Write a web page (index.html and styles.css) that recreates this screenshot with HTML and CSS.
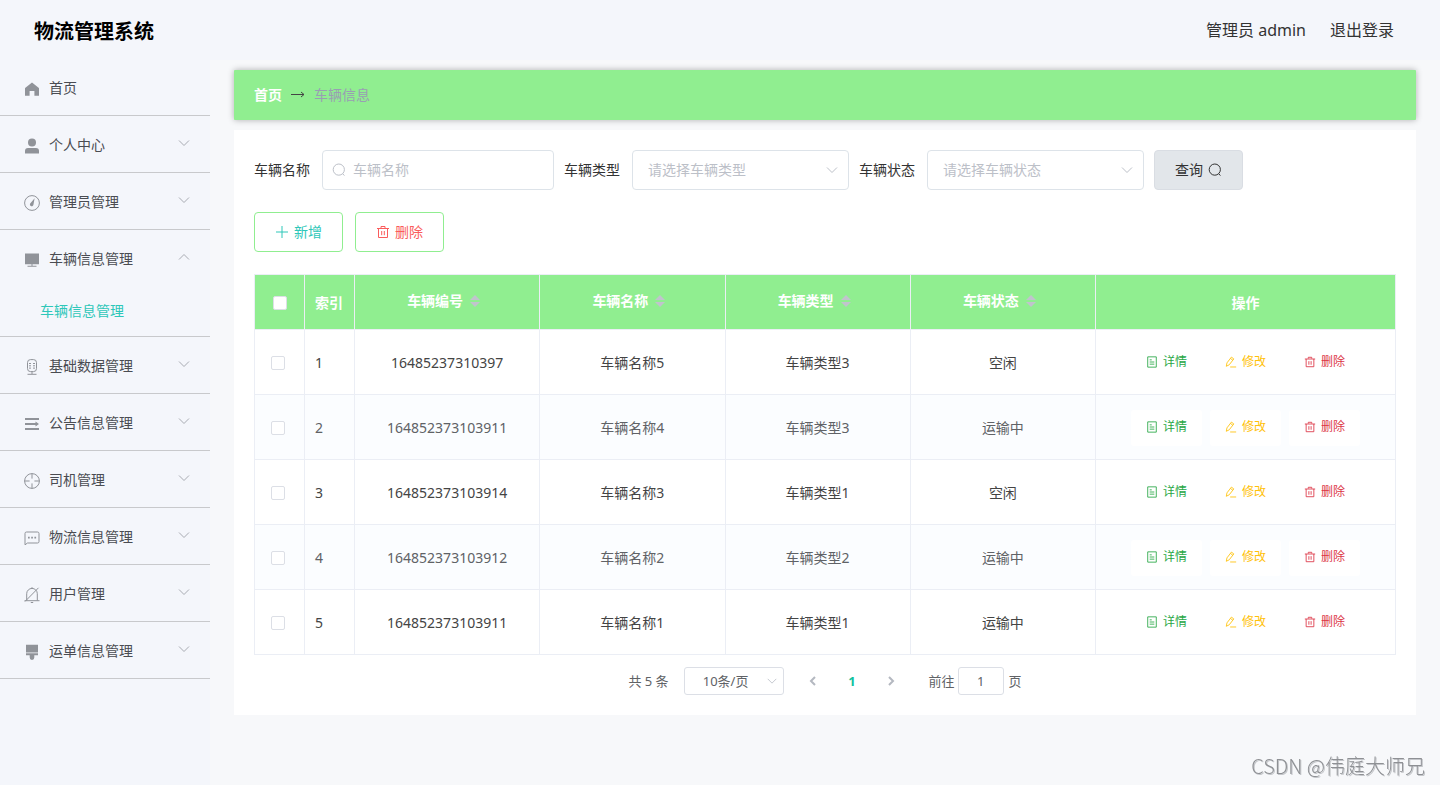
FILE: index.html
```html
<!DOCTYPE html>
<html lang="zh-CN">
<head>
<meta charset="utf-8">
<meta name="viewport" content="width=device-width, initial-scale=1">
<title>物流管理系统</title>
<link rel="stylesheet" href="styles.css">
</head>
<body>
<svg class="sprite" aria-hidden="true">
  <symbol id="down" viewBox="0 0 14 14"><path class="line" d="M2 4.5l5 5 5-5"/></symbol>
  <symbol id="search" viewBox="0 0 14 14"><circle class="line" cx="6.8" cy="6.6" r="5.6"/><path class="line" d="M10.8 10.8l1.6 1.8"/></symbol>
  <symbol id="trash" viewBox="0 0 14 14"><path class="line" d="M1 3.500h12M5 3V1.500h4V3M2.500 3.500v9h9v-9M5.700 6v4.200M8.300 6v4.200"/></symbol>
  <symbol id="plus" viewBox="0 0 14 14"><path class="line" d="M7 1v12M1 7h12"/></symbol>
  <symbol id="doc" viewBox="0 0 14 14"><path class="line" d="M2 1v12h10V1zM4.300 4.500h2.400M4.300 7h5.400M4.300 9.500h5.400"/></symbol>
  <symbol id="edit" viewBox="0 0 14 14"><path class="line" d="M1.500 12l.8-4L7.500 1.300l2.800 2.100L5 10.200zM6.300 2.800l2.800 2.100M6 12.800h7"/></symbol>
</svg>

<header class="topbar">
  <h1 class="brand">物流管理系统</h1>
  <div class="account"><span>管理员 admin</span><a href="#">退出登录</a></div>
</header>

<div class="layout">
  <nav class="sidebar">
    <a class="menu-item" href="#">
      <svg class="menu-icon" viewBox="0 0 16 16"><path class="solid" d="M8 1.5l6.600 5.200a1 1 0 0 1 .4.8v7.200h-4.600V10H5.600v4.700H1V7.500a1 1 0 0 1 .4-.8z"/></svg><span>首页</span>
    </a>
    <a class="menu-item" href="#">
      <svg class="menu-icon" viewBox="0 0 16 16"><circle class="solid" cx="8" cy="4.600" r="4"/><path class="solid" d="M1 15.500v-2.500a3 3 0 0 1 3-3h8a3 3 0 0 1 3 3v2.500z"/></svg><span>个人中心</span><svg class="arrow"><use href="#down"/></svg>
    </a>
    <a class="menu-item" href="#">
      <svg class="menu-icon" viewBox="0 0 16 16"><circle class="line" cx="8" cy="8" r="7.400"/><path class="solid" d="M10.600 3.300L9.500 9.600A1.800 1.800 0 1 1 6.600 8.100z"/></svg><span>管理员管理</span><svg class="arrow"><use href="#down"/></svg>
    </a>
    <div class="menu-group">
      <a class="menu-item" href="#">
        <svg class="menu-icon" viewBox="0 0 16 16"><path class="solid" d="M1 1.500h14v10.700H1zM7.500 12h1v1.800h-1zM3.500 13.800h9v1h-9z"/></svg><span>车辆信息管理</span><svg class="arrow open"><use href="#down"/></svg>
      </a>
      <a class="submenu-item" href="#">车辆信息管理</a>
    </div>
    <a class="menu-item" href="#">
      <svg class="menu-icon" viewBox="0 0 16 16"><rect class="line" x="3.500" y=".6" width="9" height="12" rx="3"/><path class="line" d="M8 12.600v2.400M3.500 15.300h9M5 4.500h2M9 4.500h2M5 6.800h2M9 6.800h2M5 9.100h2M9 9.100h2"/></svg><span>基础数据管理</span><svg class="arrow"><use href="#down"/></svg>
    </a>
    <a class="menu-item" href="#">
      <svg class="menu-icon" viewBox="0 0 16 16"><path class="solid" d="M1 2h14v2H1zM1 7h11v2H1zM1 12h14v2H1zM11.500 5.500L15 8l-3.500 2.500z"/></svg><span>公告信息管理</span><svg class="arrow"><use href="#down"/></svg>
    </a>
    <a class="menu-item" href="#">
      <svg class="menu-icon" viewBox="0 0 16 16"><circle class="line" cx="8" cy="8" r="7.400"/><path class="line" d="M8 .6v5M8 10.400v5M.6 8h5M10.400 8h5"/></svg><span>司机管理</span><svg class="arrow"><use href="#down"/></svg>
    </a>
    <a class="menu-item" href="#">
      <svg class="menu-icon" viewBox="0 0 16 16"><path class="line" d="M1 14.800V3.500a1.500 1.500 0 0 1 1.500-1.500h11A1.500 1.500 0 0 1 15 3.500v8a1.500 1.500 0 0 1-1.500 1.500H3.500z"/><path class="solid" d="M4 6.800h1.700v1.700H4zM7.200 6.800h1.700v1.700H7.200zM10.400 6.800h1.700v1.700h-1.700z"/></svg><span>物流信息管理</span><svg class="arrow"><use href="#down"/></svg>
    </a>
    <a class="menu-item" href="#">
      <svg class="menu-icon" viewBox="0 0 16 16"><path class="line" d="M.5 13.700h15M2.700 13.500V6.700a5.300 5.300 0 0 1 10.600 0v6.800M8 1.300V.2M6.800 15.500h2.400M1 14.500L14.500.8"/></svg><span>用户管理</span><svg class="arrow"><use href="#down"/></svg>
    </a>
    <a class="menu-item" href="#">
      <svg class="menu-icon" viewBox="0 0 16 16"><path class="solid" d="M2 .8h12v7.700H2zM2 9.300h12v1.900h-3.700v2.400a2.300 2.300 0 0 1-4.600 0v-2.400H2z"/></svg><span>运单信息管理</span><svg class="arrow"><use href="#down"/></svg>
    </a>
  </nav>

  <main class="content">
    <div class="breadcrumb">
      <a href="#">首页</a>
      <svg class="crumb-arrow" viewBox="0 0 14 8"><path class="line" d="M0 3.500h13M10 1l3 2.500L10 6"/></svg>
      <span>车辆信息</span>
    </div>

    <section class="panel">
      <form class="filters">
        <div class="field">
          <label for="name">车辆名称</label>
          <div class="control"><svg class="prefix"><use href="#search"/></svg><input class="name-input" id="name" type="text" placeholder="车辆名称"></div>
        </div>
        <div class="field">
          <label for="type">车辆类型</label>
          <div class="control"><select class="filter-select" id="type"><option>请选择车辆类型</option></select><svg class="caret"><use href="#down"/></svg></div>
        </div>
        <div class="field">
          <label for="state">车辆状态</label>
          <div class="control"><select class="filter-select" id="state"><option>请选择车辆状态</option></select><svg class="caret"><use href="#down"/></svg></div>
        </div>
        <button class="btn query" type="button">查询<svg><use href="#search"/></svg></button>
      </form>

      <div class="toolbar">
        <button class="btn add" type="button"><svg><use href="#plus"/></svg>新增</button>
        <button class="btn remove" type="button"><svg><use href="#trash"/></svg>删除</button>
      </div>

      <table class="grid">
        <colgroup><col class="narrow"><col class="narrow"><col><col><col><col><col class="wide"></colgroup>
        <thead>
          <tr>
            <th class="pick"><input type="checkbox" aria-label="全选"></th>
            <th class="index">索引</th>
            <th><div class="sortable">车辆编号<span class="sort"></span></div></th>
            <th><div class="sortable">车辆名称<span class="sort"></span></div></th>
            <th><div class="sortable">车辆类型<span class="sort"></span></div></th>
            <th><div class="sortable">车辆状态<span class="sort"></span></div></th>
            <th>操作</th>
          </tr>
        </thead>
        <tbody>
          <tr>
            <td class="pick"><input type="checkbox" aria-label="选择 1"></td><td class="index">1</td><td>16485237310397</td><td>车辆名称5</td><td>车辆类型3</td><td>空闲</td>
            <td><div class="actions"><button class="detail" type="button"><svg><use href="#doc"/></svg>详情</button><button class="modify" type="button"><svg><use href="#edit"/></svg>修改</button><button class="delete" type="button"><svg><use href="#trash"/></svg>删除</button></div></td>
          </tr>
          <tr>
            <td class="pick"><input type="checkbox" aria-label="选择 2"></td><td class="index">2</td><td>164852373103911</td><td>车辆名称4</td><td>车辆类型3</td><td>运输中</td>
            <td><div class="actions"><button class="detail" type="button"><svg><use href="#doc"/></svg>详情</button><button class="modify" type="button"><svg><use href="#edit"/></svg>修改</button><button class="delete" type="button"><svg><use href="#trash"/></svg>删除</button></div></td>
          </tr>
          <tr>
            <td class="pick"><input type="checkbox" aria-label="选择 3"></td><td class="index">3</td><td>164852373103914</td><td>车辆名称3</td><td>车辆类型1</td><td>空闲</td>
            <td><div class="actions"><button class="detail" type="button"><svg><use href="#doc"/></svg>详情</button><button class="modify" type="button"><svg><use href="#edit"/></svg>修改</button><button class="delete" type="button"><svg><use href="#trash"/></svg>删除</button></div></td>
          </tr>
          <tr>
            <td class="pick"><input type="checkbox" aria-label="选择 4"></td><td class="index">4</td><td>164852373103912</td><td>车辆名称2</td><td>车辆类型2</td><td>运输中</td>
            <td><div class="actions"><button class="detail" type="button"><svg><use href="#doc"/></svg>详情</button><button class="modify" type="button"><svg><use href="#edit"/></svg>修改</button><button class="delete" type="button"><svg><use href="#trash"/></svg>删除</button></div></td>
          </tr>
          <tr>
            <td class="pick"><input type="checkbox" aria-label="选择 5"></td><td class="index">5</td><td>164852373103911</td><td>车辆名称1</td><td>车辆类型1</td><td>运输中</td>
            <td><div class="actions"><button class="detail" type="button"><svg><use href="#doc"/></svg>详情</button><button class="modify" type="button"><svg><use href="#edit"/></svg>修改</button><button class="delete" type="button"><svg><use href="#trash"/></svg>删除</button></div></td>
          </tr>
        </tbody>
      </table>

      <div class="pagination">
        <span class="total">共 5 条</span>
        <div class="control"><select class="page-size" aria-label="每页条数"><option>10条/页</option></select><svg class="caret small"><use href="#down"/></svg></div>
        <div class="pager">
          <button type="button" aria-label="上一页"><svg class="prev" viewBox="0 0 12 12"><path d="M8 2L4 6l4 4"/></svg></button>
          <button class="current" type="button">1</button>
          <button type="button" aria-label="下一页"><svg class="next" viewBox="0 0 12 12"><path d="M4 2l4 4-4 4"/></svg></button>
        </div>
        <label for="jump">前往</label>
        <input class="jump" id="jump" type="text" value="1">
        <span>页</span>
      </div>
    </section>
  </main>
</div>
<div class="watermark">CSDN @伟庭大师兄</div>
</body>
</html>
```
FILE: styles.css
```css
* { box-sizing: border-box; }

body {
  margin: 0;
  min-height: 100vh;
  display: flex;
  flex-direction: column;
  background: #f7f8fa;
  color: #333;
  font: 14px/20px "Noto Sans", "Noto Sans CJK SC", sans-serif;
}

a { color: inherit; text-decoration: none; }
button, input, select { font: inherit; color: inherit; margin: 0; }
button { cursor: pointer; }
svg { flex: none; width: 14px; height: 14px; }
.sprite { position: absolute; width: 0; height: 0; }
.line { fill: none; stroke: currentColor; stroke-width: 1; }
.solid { fill: currentColor; }

.topbar {
  height: 60px;
  padding: 0 46px 0 34px;
  display: flex;
  align-items: center;
  justify-content: space-between;
  background: #f4f6fb;
}
.brand { margin: 0; padding-top: 4px; font-size: 20px; line-height: 28px; color: #000; }
.account { display: flex; gap: 24px; font-size: 16px; line-height: 24px; }

.layout { flex: 1; display: flex; }
.sidebar { width: 210px; flex: none; background: #f4f6fb; color: #4a4c52; }
.menu-item {
  height: 57px;
  padding: 2px 19px 0 24px;
  display: flex;
  align-items: center;
  gap: 9px;
  border-bottom: 1px solid #c8c9cc;
}
.menu-item:first-child { height: 56px; }
.sidebar > .menu-item:first-child { padding-top: 0; }
.menu-icon { width: 16px; height: 16px; color: #909399; margin-top: 2px; }
.arrow { margin-left: auto; margin-bottom: 4px; color: #a8abb2; }
.arrow.open { transform: rotate(180deg); }
.menu-group { border-bottom: 1px solid #c8c9cc; }
.menu-group .menu-item { border-bottom: 0; }
.submenu-item {
  height: 50px;
  padding-left: 40px;
  display: flex;
  align-items: center;
  color: #2ec7b9;
}

.content { flex: 1; min-width: 0; padding: 10px 24px; }
.breadcrumb {
  height: 50px;
  padding: 0 20px;
  display: flex;
  align-items: center;
  gap: 9px;
  background: #90ee90;
  border-radius: 1px;
  box-shadow: 0 0 6px rgba(0, 0, 0, .3);
  color: #999eb3;
}
.breadcrumb a { color: #fff; font-weight: 700; }
.crumb-arrow { height: 8px; color: #444; }

.panel { margin-top: 10px; padding: 20px; background: #fff; }
.filters { display: flex; gap: 10px; }
.field { display: flex; align-items: center; gap: 12px; }
.control { position: relative; display: flex; }
.name-input, .filter-select {
  height: 40px;
  border: 1px solid #dde3e9;
  border-radius: 4px;
  background: #fff;
  color: #bcc0c8;
}
.name-input { width: 232px; padding: 0 10px 2px 30px; }
.name-input::placeholder { color: #bcc0c8; }
.filter-select { width: 217px; padding: 0 32px 0 15px; }
select { appearance: none; }
.prefix { position: absolute; left: 10px; top: 13px; color: #bcc0c8; }
.caret { position: absolute; right: 10px; top: 13px; color: #bcc0c8; pointer-events: none; }
.caret.small { top: 8px; right: 6px; width: 12px; height: 12px; }

.btn {
  width: 89px;
  height: 40px;
  padding: 0;
  display: flex;
  align-items: center;
  justify-content: center;
  gap: 5px;
  border: 1px solid #90ee90;
  border-radius: 4px;
  background: #fff;
}
.query { border-color: #d9dde3; background: #e2e6ea; }
.add { color: #2ec7b9; }
.remove { color: #fa5c5c; }
.toolbar { display: flex; gap: 12px; margin: 22px 0; }

.grid { width: 100%; table-layout: fixed; border-collapse: collapse; }
.grid .narrow { width: 50px; }
.grid .wide { width: 300px; }
.grid th, .grid td { padding: 2px 0 0; border: 1px solid #ebeef5; text-align: center; }
.grid th { height: 55px; background: #90ee90; color: #fff; }
.grid td { height: 65px; }
.grid tbody { color: #444; }
.grid tbody tr:nth-child(even) { background: #fbfdff; color: #606266; }
.grid .index { text-align: left; padding-left: 10px; }
.grid td.pick { padding-right: 4px; }
.grid input {
  appearance: none;
  display: block;
  width: 14px;
  height: 14px;
  margin: 0 auto;
  border: 1px solid #dcdfe6;
  border-radius: 2px;
  background: #fff;
}
.sortable { display: flex; align-items: center; justify-content: center; gap: 7px; padding: 0 7px 4px 0; }
.sort { display: grid; gap: 2px; }
.sort::before, .sort::after { content: ""; border: 5px solid transparent; }
.sort::before { border-top: 0; border-bottom-color: #c0c4cc; }
.sort::after { border-bottom: 0; border-top-color: #c0c4cc; }

.actions { display: flex; justify-content: center; gap: 8px; }
.actions button {
  width: 71px;
  height: 36px;
  padding: 0 0 2px;
  display: flex;
  align-items: center;
  justify-content: center;
  gap: 5px;
  border: 0;
  border-radius: 3px;
  background: #fff;
  font-size: 12px;
}
.actions svg { width: 12px; height: 12px; }
.detail { color: #28a745; }
.modify { color: #ffc107; }
.delete { color: #dc3545; }

.pagination {
  padding-top: 12px;
  display: flex;
  align-items: center;
  justify-content: center;
  color: #606266;
  font-size: 13px;
}
.total { margin-right: 15px; }
.page-size {
  width: 100px;
  height: 28px;
  padding: 0 22px 0 6px;
  border: 1px solid #dcdfe6;
  border-radius: 3px;
  background: #fff;
  text-align: center;
  text-align-last: center;
}
.pager { display: flex; margin: 0 18px 0 10px; }
.pager button {
  width: 39px;
  height: 28px;
  padding: 0;
  display: flex;
  align-items: center;
  justify-content: center;
  border: 0;
  background: none;
  color: #b4b8c0;
}
.pager .current { color: #13c19e; font-weight: 700; }
.pager svg { width: 12px; height: 12px; fill: none; stroke: currentColor; stroke-width: 2; }
.jump {
  width: 46px;
  height: 28px;
  margin: 0 5px 0 3px;
  padding: 0 3px;
  border: 1px solid #dcdfe6;
  border-radius: 3px;
  background: #fff;
  text-align: center;
}

.watermark {
  position: fixed;
  right: 15px;
  bottom: 5px;
  color: #8e9094;
  font-size: 20px;
  line-height: 28px;
  font-family: "Noto Sans CJK SC", sans-serif;
  font-weight: 300;
  text-shadow: 1px 1px 0 #c4c6ca;
}
```
